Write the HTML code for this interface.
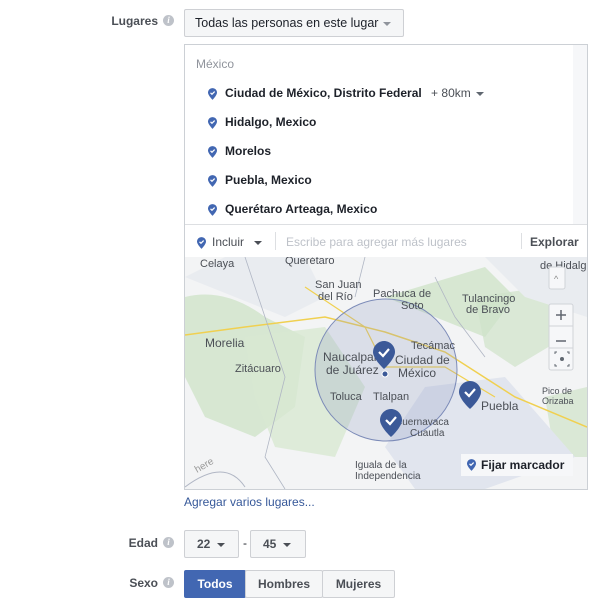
<!DOCTYPE html>
<html><head><meta charset="utf-8"><style>
body{margin:0;background:#fff;font-family:"Liberation Sans",Arial,sans-serif;width:603px;height:605px;position:relative;overflow:hidden;color:#1d2129}
.a{position:absolute}
.lbl{font-size:12px;font-weight:bold;color:#4b4f56;text-align:right;width:58px;left:100px}
.info{width:11px;height:11px;border-radius:50%;background:#bec2c9;color:#fff;font-size:9px;font-weight:bold;text-align:center;line-height:11px;font-family:"Liberation Serif",serif;font-style:italic}
.btn{border:1px solid #ced0d4;background:#f5f6f7;border-radius:2px;font-size:12px;font-weight:bold;color:#4b4f56;box-sizing:border-box}
.car{display:inline-block;width:0;height:0;border-left:4px solid transparent;border-right:4px solid transparent;border-top:4px solid #4b4f56;vertical-align:middle;margin-left:5px}
.item{left:208px;font-size:12px;font-weight:bold;color:#1d2129}
.pin{display:inline-block;width:9px;height:12px;vertical-align:middle;margin-right:8px}
</style></head><body>
<div class="a lbl" style="top:14px">Lugares</div>
<div class="a info" style="left:163px;top:15px">i</div>
<div class="a btn" style="left:184px;top:9px;width:220px;height:28px;line-height:26px;padding-left:10px;font-weight:normal;color:#1d2129;font-size:12.5px">Todas las personas en este lugar<span class="car" style="border-top-color:#90949c"></span></div>

<div class="a" style="left:184px;top:44px;width:404px;height:446px;border:1px solid #ccd0d5;box-sizing:border-box"></div>
<div class="a" style="left:573px;top:45px;width:14px;height:180px;background:#f6f7f9"></div>
<div class="a" style="left:196px;top:57px;font-size:12px;color:#90949c">México</div>
<svg width="0" height="0" style="position:absolute"><defs><symbol id="p" viewBox="0 0 10 13"><path d="M5 0C2.2 0 0 2.2 0 5c0 3 5 8 5 8s5-5 5-8c0-2.8-2.2-5-5-5z" fill="#4267b2"/><path d="M2.8 5.2l1.6 1.6 3-3" stroke="#fff" stroke-width="1.4" fill="none"/></symbol></defs></svg>
<div class="a item" style="top:86px"><svg class="pin"><use href="#p"/></svg>Ciudad de México, Distrito Federal <span style="font-weight:normal;color:#4b4f56;margin-left:6px">+ 80km</span><span class="car" style="border-top-color:#606770"></span></div>
<div class="a item" style="top:115px"><svg class="pin"><use href="#p"/></svg>Hidalgo, Mexico</div>
<div class="a item" style="top:144px"><svg class="pin"><use href="#p"/></svg>Morelos</div>
<div class="a item" style="top:173px"><svg class="pin"><use href="#p"/></svg>Puebla, Mexico</div>
<div class="a item" style="top:202px"><svg class="pin"><use href="#p"/></svg>Querétaro Arteaga, Mexico</div>
<div class="a" style="left:185px;top:224px;width:402px;height:1px;background:#dddfe2"></div>
<div class="a" style="left:197px;top:235px;font-size:12px;color:#4b4f56"><svg class="pin" style="margin-right:6px"><use href="#p"/></svg>Incluir<span class="car" style="margin-left:10px"></span></div>
<div class="a" style="left:275px;top:232px;width:1px;height:18px;background:#dddfe2"></div>
<div class="a" style="left:286px;top:235px;font-size:12px;color:#bec2c9">Escribe para agregar más lugares</div>
<div class="a" style="left:521px;top:233px;width:1px;height:16px;background:#dddfe2"></div>
<div class="a" style="left:530px;top:235px;font-size:12px;font-weight:bold;color:#4b4f56">Explorar</div>

<svg class="a" style="left:185px;top:257px" width="402" height="232" viewBox="0 0 402 232">
<rect width="402" height="232" fill="#f3f4f5"/>
<path d="M0 40 Q40 30 80 60 L120 80 L110 150 L70 180 L20 160 L0 120Z" fill="#cfe3c9" opacity=".8"/>
<path d="M200 40 L300 10 L330 40 L300 80 L250 60Z" fill="#cfe3c9" opacity=".8"/>
<path d="M290 40 L360 30 L380 80 L330 110 L300 90Z" fill="#cfe3c9" opacity=".7"/>
<path d="M60 80 L140 70 L180 130 L150 200 L90 190 L70 140Z" fill="#d8e8d2" opacity=".8"/>
<path d="M360 140 L402 130 L402 200 L370 200Z" fill="#cfe3c9" opacity=".7"/>
<path d="M0 20 L40 0 L120 0 L140 40 L100 60Z" fill="#e9ecf0"/>
<path d="M300 0 L402 0 L402 60 L340 40Z" fill="#e9ecf0"/>
<path d="M240 130 L320 120 L390 200 L300 232 L230 232 L200 190Z" fill="#e1e5ee"/>
<path d="M0 78 L60 70 L140 60 L200 75 L260 95 L330 140 L402 170" stroke="#f0d050" stroke-width="1.5" fill="none"/>
<path d="M120 30 L180 70 L200 110 L260 110 L310 140" stroke="#f0d050" stroke-width="1.2" fill="none"/>
<path d="M0 230 Q40 200 60 230" stroke="#b0b6c4" fill="none"/>
<path d="M60 0 L80 60 L100 120 L80 200 L100 232 M180 0 L170 40 M250 20 L270 60 L300 100" stroke="#b0b6c4" stroke-width=".8" fill="none"/>
<circle cx="201" cy="113" r="71" fill="#8e9bc2" fill-opacity=".25" stroke="#7c8bb8" stroke-width="1"/>
<g font-size="11" fill="#4b4f56" font-family="Liberation Sans,sans-serif">
<text x="15" y="10">Celaya</text><text x="100" y="7">Querétaro</text>
<text x="130" y="31">San Juan</text><text x="133" y="43">del Río</text>
<text x="188" y="40">Pachuca de</text><text x="216" y="52">Soto</text>
<text x="277" y="45">Tulancingo</text><text x="281" y="56">de Bravo</text>
<text x="355" y="12">de Hidalgo</text>
<text x="20" y="90" font-size="12">Morelia</text>
<text x="50" y="115">Zitácuaro</text>
<text x="138" y="104" font-size="12">Naucalpan</text><text x="141" y="117" font-size="12">de Juárez</text>
<text x="210" y="107" font-size="12">Ciudad de</text><text x="213" y="120" font-size="12">México</text>
<text x="226" y="92">Tecámac</text>
<text x="145" y="143">Toluca</text><text x="188" y="143">Tlalpan</text>
<text x="296" y="153" font-size="12">Puebla</text>
<text x="357" y="137" font-size="9">Pico de</text><text x="357" y="147" font-size="9">Orizaba</text>
<text x="210" y="168" font-size="10">Cuernavaca</text><text x="225" y="179" font-size="10">Cuautla</text>
<text x="170" y="211" font-size="10">Iguala de la</text><text x="170" y="222" font-size="10">Independencia</text>
</g>
<g transform="translate(188,84)"><path d="M11 0C5 0 0 5 0 11c0 7 11 17 11 17s11-10 11-17C22 5 17 0 11 0z" fill="#3b5998"/><path d="M6 11l4 4 6-7" stroke="#fff" stroke-width="2.2" fill="none"/></g>
<circle cx="200" cy="117" r="3" fill="#3b5998" stroke="#fff"/>
<g transform="translate(274,124)"><path d="M11 0C5 0 0 5 0 11c0 7 11 17 11 17s11-10 11-17C22 5 17 0 11 0z" fill="#3b5998"/><path d="M6 11l4 4 6-7" stroke="#fff" stroke-width="2.2" fill="none"/></g>
<g transform="translate(195,152)"><path d="M11 0C5 0 0 5 0 11c0 7 11 17 11 17s11-10 11-17C22 5 17 0 11 0z" fill="#3b5998"/><path d="M6 11l4 4 6-7" stroke="#fff" stroke-width="2.2" fill="none"/></g>
<rect x="364" y="10" width="16" height="22" rx="2" fill="#f6f7f9" stroke="#d0d3d8"/><text x="369" y="25" font-size="9" fill="#888">^</text>
<rect x="364" y="47" width="24" height="66" rx="2" fill="#f6f7f9" stroke="#d0d3d8"/>
<line x1="364" y1="69" x2="388" y2="69" stroke="#d0d3d8"/><line x1="364" y1="91" x2="388" y2="91" stroke="#d0d3d8"/>
<path d="M371 58h10M376 53v10M371 84h10" stroke="#606770" stroke-width="1.5"/>
<path d="M370 97v-2h2M382 95h2v2M384 107v2h-2M372 109h-2v-2" stroke="#606770" fill="none"/><circle cx="377" cy="102" r="2" fill="#606770"/>
<rect x="276" y="197" width="112" height="22" fill="#f6f7f9"/>
<use href="#p" x="282" y="202" width="9" height="12"/>
<text x="296" y="212" font-size="12" font-weight="bold" fill="#1d2129">Fijar marcador</text>
<text x="12" y="216" font-size="10" fill="#999" transform="rotate(-30 12 216)">here</text>
</svg>

<div class="a" style="left:184px;top:495px;font-size:12px;color:#365899">Agregar varios lugares...</div>

<div class="a lbl" style="top:536px">Edad</div>
<div class="a info" style="left:163px;top:537px">i</div>
<div class="a btn" style="left:184px;top:530px;width:55px;height:28px;line-height:26px;padding-left:12px">22<span class="car" style="margin-left:7px"></span></div>
<div class="a" style="left:243px;top:536px;font-size:12px">-</div>
<div class="a btn" style="left:250px;top:530px;width:56px;height:28px;line-height:26px;padding-left:12px">45<span class="car" style="margin-left:7px"></span></div>

<div class="a lbl" style="top:576px">Sexo</div>
<div class="a info" style="left:163px;top:577px">i</div>
<div class="a btn" style="left:184px;top:570px;width:62px;height:28px;line-height:26px;text-align:center;background:#4267b2;border-color:#4267b2;color:#fff">Todos</div>
<div class="a btn" style="left:245px;top:570px;width:78px;height:28px;line-height:26px;text-align:center">Hombres</div>
<div class="a btn" style="left:322px;top:570px;width:73px;height:28px;line-height:26px;text-align:center">Mujeres</div>
</body></html>
